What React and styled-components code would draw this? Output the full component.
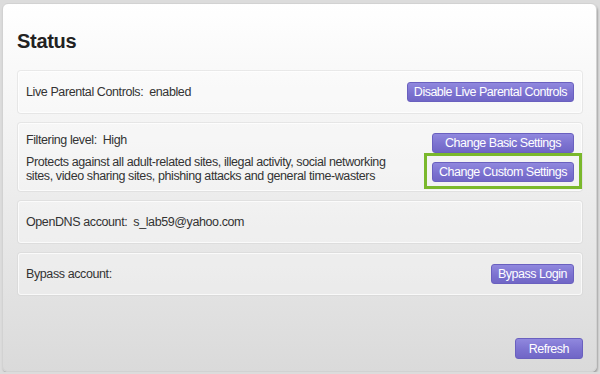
import styled, { createGlobalStyle } from "styled-components";

const GlobalStyle = createGlobalStyle`
  html, body {
    margin: 0;
    padding: 0;
    background: #dcdcdc;
  }

  body {
    font-family: "Liberation Sans", Arial, sans-serif;
  }
`;

export default function App() {
  return (
    <>
      <GlobalStyle />
      <Panel>
        <Title>Status</Title>
        <Rows>
          <Row>
            <Text>
              <Label>Live Parental Controls:</Label>enabled
            </Text>
            <Button>Disable Live Parental Controls</Button>
          </Row>
          <Row $tall>
            <Details>
              <Text>
                <Label>Filtering level:</Label>High
              </Text>
              <Description>
                Protects against all adult-related sites, illegal activity, social networking
                sites, video sharing sites, phishing attacks and general time-wasters
              </Description>
            </Details>
            <ButtonStack>
              <Button>Change Basic Settings</Button>
              <Highlight>
                <Button>Change Custom Settings</Button>
              </Highlight>
            </ButtonStack>
          </Row>
          <Row>
            <Text>
              <Label>OpenDNS account:</Label>s_lab59@yahoo.com
            </Text>
          </Row>
          <Row>
            <Text>
              <Label>Bypass account:</Label>
            </Text>
            <Button>Bypass Login</Button>
          </Row>
        </Rows>
        <Footer>
          <Button $wide>Refresh</Button>
        </Footer>
      </Panel>
    </>
  );
}

const Panel = styled.main`
  display: flex;
  flex-direction: column;
  box-sizing: border-box;
  width: 595px;
  height: 369px;
  margin: 3px 0 0 2px;
  padding: 25px 13px 12px 14px;
  border: 1px solid #d2d2d2;
  border-radius: 6px;
  background: linear-gradient(to bottom, #ffffff 0%, #f1f1f1 40%, #dadada 100%);
  box-shadow: 1px 2px 2px rgba(0, 0, 0, 0.25);
`;

const Title = styled.h1`
  margin: 0 0 17px 0;
  font-size: 20px;
  line-height: 24px;
  font-weight: bold;
  letter-spacing: -0.3px;
  color: #222;
`;

const Rows = styled.div`
  display: flex;
  flex-direction: column;
  gap: 8px;
`;

const Row = styled.section`
  display: flex;
  align-items: center;
  justify-content: space-between;
  box-sizing: border-box;
  height: ${(props) => (props.$tall ? "70px" : "44px")};
  padding: 0 8px;
  border: 1px solid rgba(0, 0, 0, 0.07);
  border-radius: 4px;
  background: rgba(255, 255, 255, 0.3);
  box-shadow: inset 0 0 0 1px rgba(255, 255, 255, 0.7);
`;

const Text = styled.p`
  margin: 0;
  font-size: 12.5px;
  line-height: 15px;
  letter-spacing: -0.4px;
  color: #333;
`;

const Label = styled.span`
  margin-right: 6px;
`;

const Details = styled.div`
  display: flex;
  flex-direction: column;
  gap: 7px;
  margin-top: 1px;
`;

const Description = styled.p`
  max-width: 385px;
  margin: 0;
  font-size: 12.5px;
  line-height: 14px;
  letter-spacing: -0.4px;
  color: #333;
`;

const ButtonStack = styled.div`
  display: flex;
  flex-direction: column;
  align-items: stretch;
  gap: 9px;
`;

const Highlight = styled.div`
  display: flex;
  margin: -9px -8px -7px -8px;
  padding: 6px 5px 4px 5px;
  border: 3px solid #7ab82c;

  & > button {
    flex: 1;
  }
`;

const Button = styled.button`
  box-sizing: border-box;
  height: ${(props) => (props.$wide ? "21px" : "20px")};
  padding: ${(props) => (props.$wide ? "0 13px" : "0 6px")};
  border: 1px solid #6a60bf;
  border-radius: 3px;
  background: linear-gradient(to bottom, #9088de 0%, #7c72d0 55%, #7066c6 100%);
  color: #fff;
  font-family: "Liberation Sans", Arial, sans-serif;
  font-size: 12.5px;
  line-height: 18px;
  letter-spacing: -0.5px;
  white-space: nowrap;
  cursor: pointer;
`;

const Footer = styled.footer`
  display: flex;
  justify-content: flex-end;
  margin-top: auto;
`;
